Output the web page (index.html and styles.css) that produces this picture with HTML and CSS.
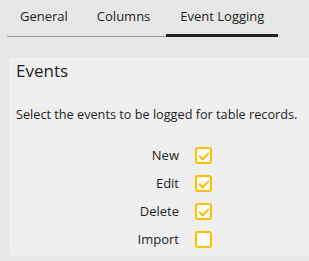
FILE: index.html
```html
<!DOCTYPE html>
<html lang="en">
<head>
  <meta charset="UTF-8" />
  <meta name="viewport" content="width=device-width, initial-scale=1.0" />
  <title>Table Settings</title>
  <link rel="stylesheet" href="styles.css">
</head>
<body>
  <div class="tabs">
    <div class="tab">General</div>
    <div class="tab">Columns</div>
    <div class="tab active">Event Logging</div>
  </div>

  <div class="panel">
    <h2 class="panel-title">Events</h2>
    <p class="panel-text">Select the events to be logged for table records.</p>
    <div class="event-list">
      <label class="event-label" for="evNew">New</label>
      <span class="check checked" id="evNew"></span>
      <label class="event-label" for="evEdit">Edit</label>
      <span class="check checked" id="evEdit"></span>
      <label class="event-label" for="evDelete">Delete</label>
      <span class="check checked" id="evDelete"></span>
      <label class="event-label" for="evImport">Import</label>
      <span class="check" id="evImport"></span>
    </div>
  </div>
</body>
</html>
```

FILE: styles.css
```css
:root {
  --page-bg: #e6e6e6;
  --panel-bg: #efefef;
  --text-color: #1e1e1e;
  --yellow: #ffbf00;
}

* {
  box-sizing: border-box;
}

body {
  margin: 0;
  padding: 0 0 0 7px;
  background: var(--page-bg);
  font-family: 'Open Sans', 'Liberation Sans', sans-serif;
  color: var(--text-color);
  overflow: hidden;
}

.tabs {
  display: inline-flex;
  gap: 3px;
  border-bottom: 1px solid #9a9a9a;
}

.tab {
  padding: 7px 13px 11px;
  font-size: 13px;
  line-height: 18px;
  cursor: pointer;
}

.tab.active {
  padding: 7px 14px 9px;
  border-bottom: 3px solid #222;
  margin-bottom: -1px;
}

.panel {
  margin: 20px 0 0 2px;
  padding: 2px 7px 8px;
  background: var(--panel-bg);
  border-radius: 4px 0 0 4px;
}

.panel-title {
  margin: 0;
  font-size: 17px;
  line-height: 24px;
  font-weight: 400;
}

.panel-text {
  margin: 22px 0 0;
  font-size: 12.7px;
  line-height: 18px;
}

.event-list {
  display: grid;
  grid-template-columns: 163px 17px;
  column-gap: 16px;
  row-gap: 10px;
  align-items: center;
  margin-top: 23px;
}

.event-label {
  text-align: right;
  font-size: 13px;
  line-height: 18px;
}

.check {
  width: 17px;
  height: 17px;
  border: 2px solid var(--yellow);
  border-radius: 3px;
  background: #fff;
  position: relative;
}

.check.checked::after {
  content: '';
  position: absolute;
  left: 4px;
  top: 1px;
  width: 4px;
  height: 8px;
  border-right: 2px solid var(--yellow);
  border-bottom: 2px solid var(--yellow);
  transform: rotate(45deg);
}
```
